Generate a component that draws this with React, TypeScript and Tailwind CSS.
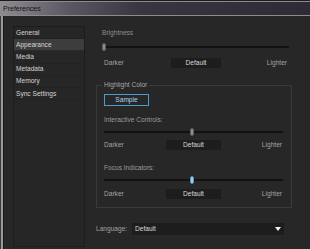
const sections = ['General', 'Appearance', 'Media', 'Metadata', 'Memory', 'Sync Settings']

function Slider({ width, pos, blue }: { width: number; pos: number; blue?: boolean }) {
  return (
    <div className="flex items-center h-[8px]" style={{ width }}>
      <div className="h-[2px] bg-[#121212]" style={{ width: pos }} />
      <div
        className={
          blue
            ? 'w-[4px] h-[8px] rounded-full bg-[#9fd0ee] border border-[#4f8fb5] shrink-0'
            : 'w-[4px] h-[8px] rounded-full bg-[#8a8a8a] border border-[#5e5e5e] shrink-0'
        }
      />
      <div className="h-[2px] flex-1 bg-[#121212]" />
    </div>
  )
}

function RangeLabels({
  width,
  left,
  box,
  darkerPad,
  lighterPad,
}: {
  width: number
  left: number
  box: number
  darkerPad: number
  lighterPad: number
}) {
  return (
    <div className="flex items-center h-[10px]" style={{ width }}>
      <div className="text-[#a3a3a3]" style={{ width: left, paddingLeft: darkerPad }}>
        Darker
      </div>
      <div className="h-[10px] bg-[#1d1d1d] flex items-center justify-center text-[#d8d8d8]" style={{ width: box }}>
        Default
      </div>
      <div className="flex-1 text-right text-[#a3a3a3]" style={{ paddingRight: lighterPad }}>
        Lighter
      </div>
    </div>
  )
}

export default function App() {
  return (
    <div className="w-[310px] h-[249px] bg-[#272727] flex flex-col overflow-hidden font-['Liberation_Sans',sans-serif] text-[6.6px] leading-[8px]">
      {/* Title bar */}
      <div className="bg-[#1b1b1b] pt-px">
        <div className="h-[15px] border-t border-b border-[#8c8c8c] bg-[linear-gradient(90deg,#8e8c91_0%,#5c5862_22%,#3a3541_45%,#2f2a35_100%)] flex items-center pl-[3px] text-[#111] text-[7px]">
          Preferences
        </div>
      </div>

      {/* Body */}
      <div className="flex flex-1 min-h-0">
        <div className="w-px bg-[#3a3a3a]" />
        <div className="w-[2px] bg-[#9a9a9a]" />
        <div className="w-px bg-[#181818]" />

        <div className="flex flex-1 pl-[9px]">
          {/* Sidebar */}
          <div className="w-[72px] mt-[10px] mb-[2px] border border-[#1d1d1d] bg-[#262626] flex flex-col text-[#d4d4d4]">
            {sections.map((s) => (
              <div
                key={s}
                className={
                  s === 'Appearance'
                    ? 'h-[12.2px] flex items-center pl-[2px] bg-[#3d3d3d] border-b border-[#2a2a2a]'
                    : 'h-[12.2px] flex items-center pl-[2px] border-b border-[#222]'
                }
              >
                {s}
              </div>
            ))}
          </div>

          {/* Main pane */}
          <div className="flex flex-col pl-[11px] pt-[13px]">
            <div className="pl-[6px] flex flex-col">
              <div className="text-[#8e8e8e]">Brightness</div>
              <div className="mt-[6px]">
                <Slider width={187} pos={0} />
              </div>
              <div className="mt-[7px]">
                <RangeLabels width={187} left={69} box={50} darkerPad={2} lighterPad={2} />
              </div>
            </div>

            <fieldset className="mt-[13px] w-[196px] border border-[#3a3a3a] pl-[7px] pt-[5px] pb-[8px]">
              <legend className="-ml-[2px] px-[2px] text-[#a6a6a6]">Highlight Color</legend>
              <div className="w-[45px] h-[12px] border border-[#4a9ccb] flex items-center justify-center text-[#a7d6f3]">
                Sample
              </div>
              <div className="mt-[10px] text-[#9a9a9a]">Interactive Controls:</div>
              <div className="mt-[4px]">
                <Slider width={179} pos={86} />
              </div>
              <div className="mt-[4px]">
                <RangeLabels width={179} left={62} box={55} darkerPad={0} lighterPad={1} />
              </div>
              <div className="mt-[14px] text-[#9a9a9a]">Focus Indicators:</div>
              <div className="mt-[4px]">
                <Slider width={179} pos={86} blue />
              </div>
              <div className="mt-[5px]">
                <RangeLabels width={179} left={62} box={55} darkerPad={0} lighterPad={1} />
              </div>
            </fieldset>

            <div className="mt-[15px] flex items-center">
              <div className="w-[36px] text-[#a3a3a3]">Language:</div>
              <div className="w-[152px] h-[12px] bg-[#1d1d1d] flex items-center pl-[3px] pr-[3px] text-[#d8d8d8]">
                <span className="flex-1">Default</span>
                <svg width="6" height="4" viewBox="0 0 6 4">
                  <path d="M0 0 L6 0 L3 4 Z" fill="#f0f0f0" />
                </svg>
              </div>
            </div>
          </div>
        </div>
      </div>
    </div>
  )
}
